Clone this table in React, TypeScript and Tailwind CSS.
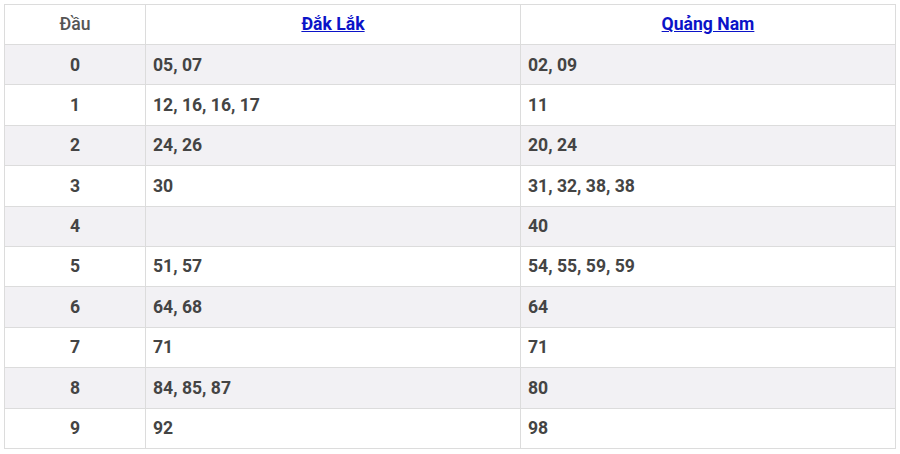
const rows: [string, string, string][] = [
  ["0", "05, 07", "02, 09"],
  ["1", "12, 16, 16, 17", "11"],
  ["2", "24, 26", "20, 24"],
  ["3", "30", "31, 32, 38, 38"],
  ["4", "", "40"],
  ["5", "51, 57", "54, 55, 59, 59"],
  ["6", "64, 68", "64"],
  ["7", "71", "71"],
  ["8", "84, 85, 87", "80"],
  ["9", "92", "98"],
];

export default function App() {
  return (
    <div className="bg-white p-[4px] font-['Roboto',sans-serif]">
      <table className="w-[892px] table-fixed border-collapse text-[17.6px] text-[#444]">
        <colgroup>
          <col className="w-[141px]" />
          <col className="w-[375px]" />
          <col />
        </colgroup>
        <thead>
          <tr className="h-[40px]">
            <th className="border border-[#dcdcdc] font-medium text-[#555]">Đầu</th>
            <th className="border border-[#dcdcdc] font-bold">
              <a href="#" className="text-[#0b13c8] underline">Đắk Lắk</a>
            </th>
            <th className="border border-[#dcdcdc] font-bold">
              <a href="#" className="text-[#0b13c8] underline">Quảng Nam</a>
            </th>
          </tr>
        </thead>
        <tbody>
          {rows.map(([d, a, b], i) => (
            <tr key={d} className={i % 2 === 0 ? "h-[40.4px] bg-[#f2f1f4]" : "h-[40.4px] bg-white"}>
              <td className="border border-[#dcdcdc] text-center font-bold">{d}</td>
              <td className="border border-[#dcdcdc] px-[7px] font-bold">{a}</td>
              <td className="border border-[#dcdcdc] px-[7px] font-bold">{b}</td>
            </tr>
          ))}
        </tbody>
      </table>
    </div>
  );
}
